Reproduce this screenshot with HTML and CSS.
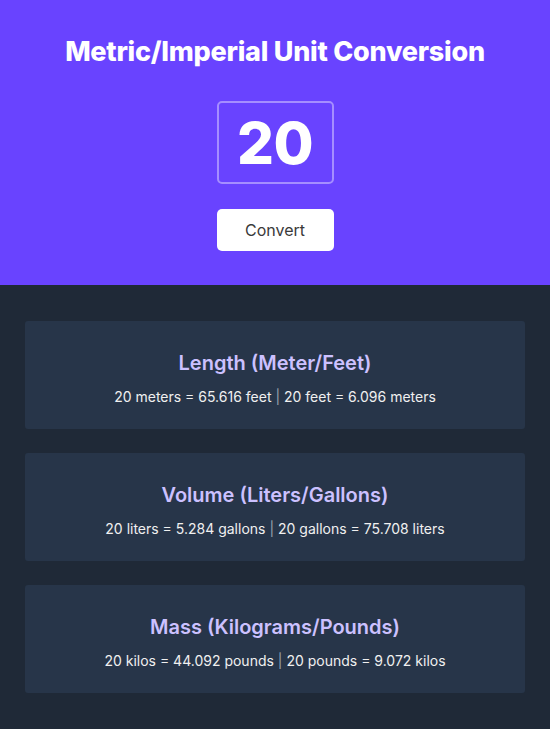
FILE: index.html
```html
<!DOCTYPE html>
<html lang="en">
<head>
<meta charset="utf-8">
<title>Metric/Imperial Unit Conversion</title>
<link rel="stylesheet" href="styles.css">
</head>
<body>
<header class="hero">
  <h1 class="title">Metric/Imperial Unit Conversion</h1>
  <div class="input-box">20</div>
  <button class="btn">Convert</button>
</header>
<main class="results">
  <section class="card">
    <h2 class="card-title">Length (Meter/Feet)</h2>
    <p class="card-text">20 meters = 65.616 feet <span class="sep">|</span> 20 feet = 6.096 meters</p>
  </section>
  <section class="card">
    <h2 class="card-title">Volume (Liters/Gallons)</h2>
    <p class="card-text">20 liters = 5.284 gallons <span class="sep">|</span> 20 gallons = 75.708 liters</p>
  </section>
  <section class="card">
    <h2 class="card-title">Mass (Kilograms/Pounds)</h2>
    <p class="card-text">20 kilos = 44.092 pounds <span class="sep">|</span> 20 pounds = 9.072 kilos</p>
  </section>
</main>
</body>
</html>
```
FILE: styles.css
```css
* { box-sizing: border-box; }
html, body { margin: 0; padding: 0; }
body {
  font-family: Inter, "Noto Sans", sans-serif;
  background: #1f2937;
  min-height: 729px;
}
.hero {
  background: #6943ff;
  height: 285px;
  display: flex;
  flex-direction: column;
  align-items: center;
  padding-top: 36px;
}
.title {
  margin: 0;
  color: #fff;
  font-size: 27px;
  font-weight: 800;
  letter-spacing: -0.25px;
  line-height: 32px;
}
.input-box {
  margin-top: 33px;
  width: 117px;
  height: 83px;
  border: 2px solid rgba(255,255,255,0.4);
  border-radius: 5px;
  color: #fff;
  font-size: 58px;
  font-weight: 800;
  display: flex;
  align-items: center;
  justify-content: center;
  letter-spacing: -0.5px;
}
.btn {
  margin-top: 25px;
  width: 117px;
  height: 42px;
  border: none;
  border-radius: 5px;
  background: #fff;
  color: #3a3a3a;
  font-family: Inter, sans-serif;
  font-size: 16px;
  font-weight: 400;
}
.results {
  padding: 36px 25px;
  display: flex;
  flex-direction: column;
  gap: 24px;
}
.card {
  background: #273549;
  border-radius: 3px;
  height: 108px;
  display: flex;
  flex-direction: column;
  align-items: center;
  padding-top: 30px;
}
.card-title {
  margin: 0;
  color: #ccc1ff;
  font-size: 20px;
  font-weight: 600;
  line-height: 24px;
}
.card-text {
  margin: 12px 0 0;
  color: #f0f0f0;
  font-size: 14px;
  line-height: 20px;
}
.sep { color: #9aa3ae; }
```
